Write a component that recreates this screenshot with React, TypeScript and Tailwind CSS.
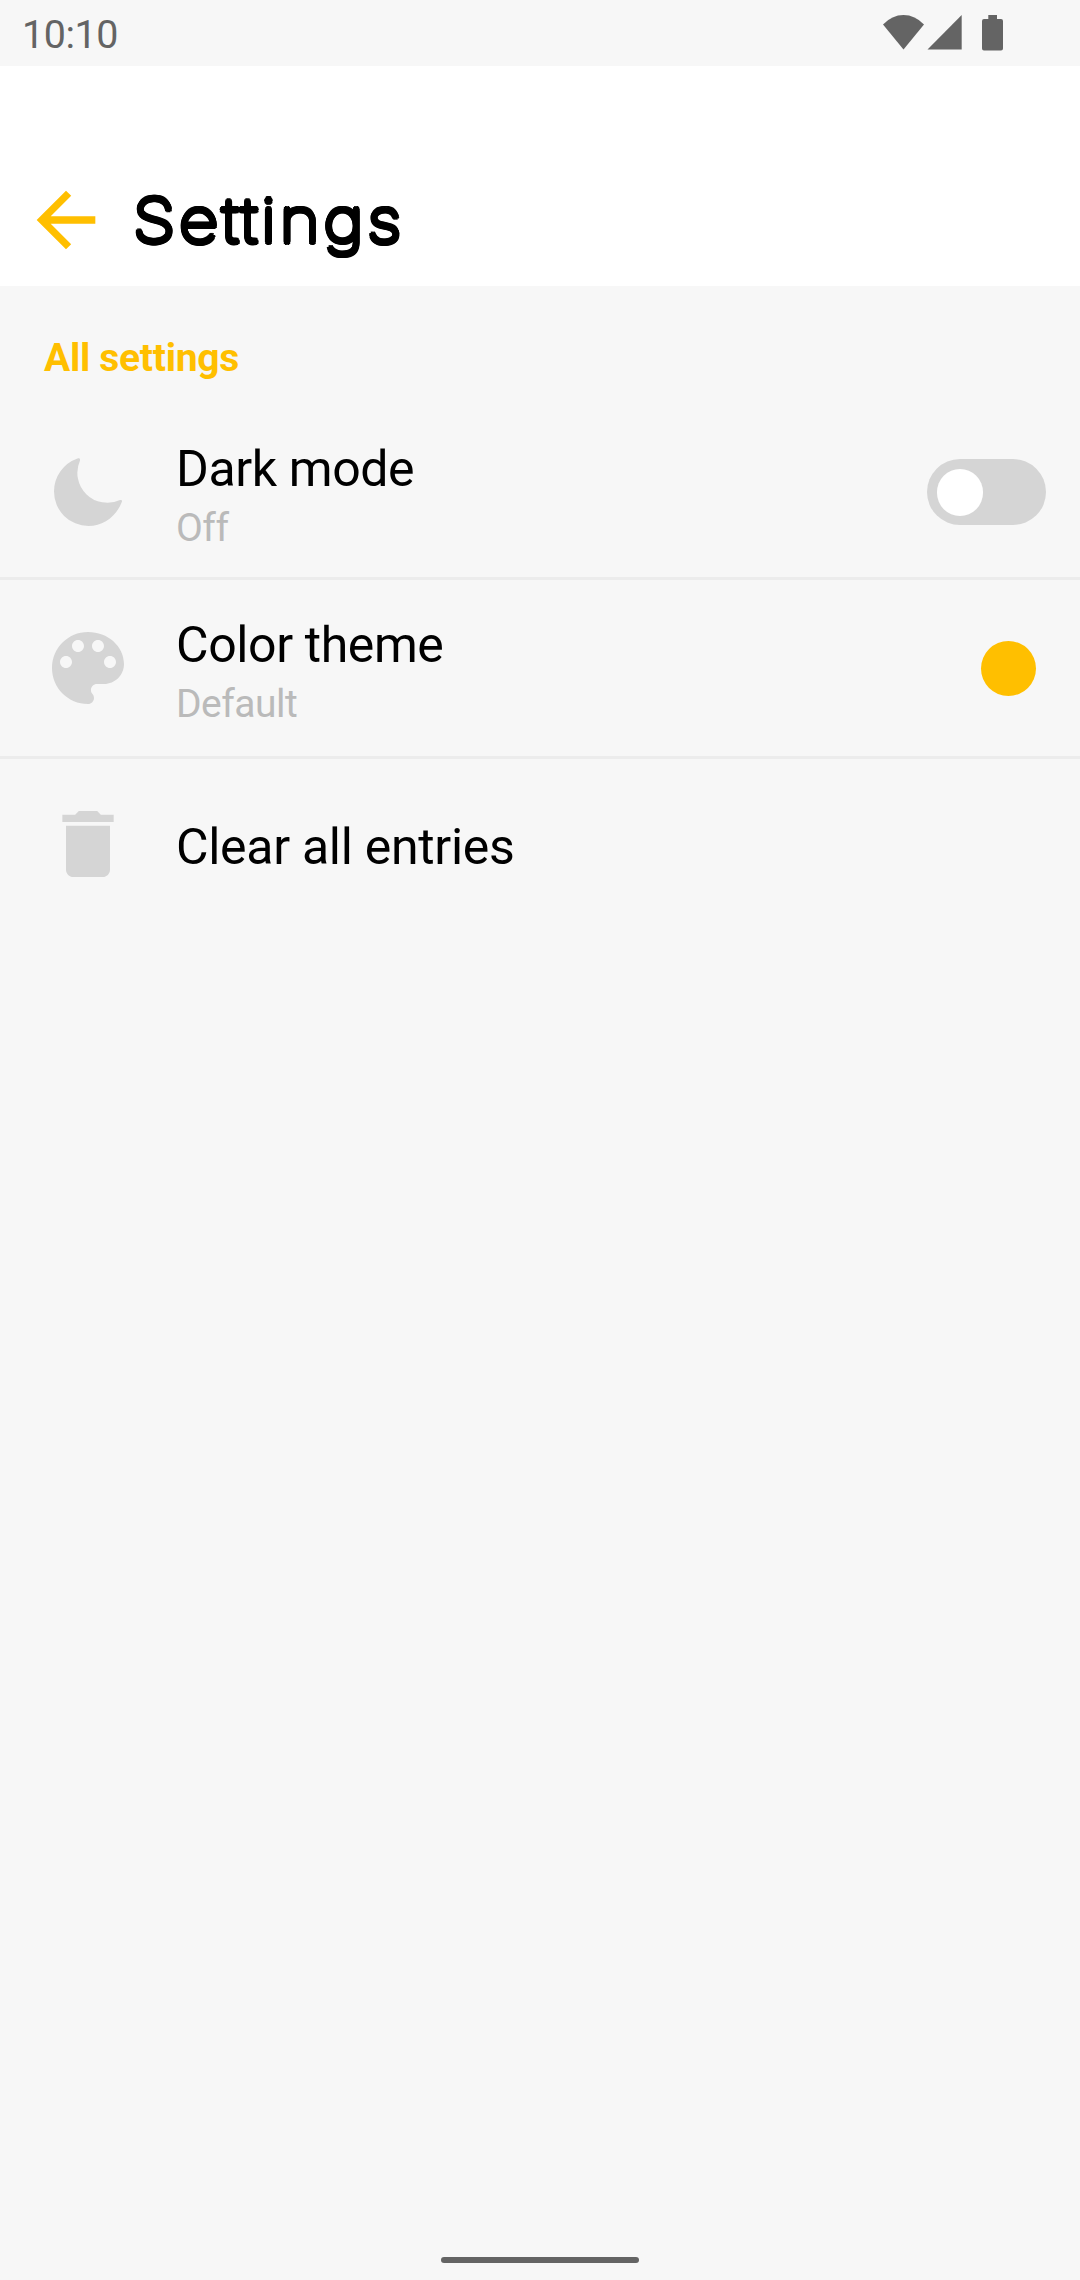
import type { ReactNode } from "react";

function StatusBar() {
  return (
    <div className="flex h-[66px] items-center justify-between bg-[#f7f7f7] pl-[22px] text-[#646464]">
      <span className="pt-[3px] text-[39.4px] leading-[66px] tracking-[-0.4px]">10:10</span>
      <svg className="mr-[76px] h-[66px] w-[122px]" viewBox="882 0 122 66" fill="currentColor">
        <path d="M883 24.5Q892 15 903.500 15T924 24.500L903.500 49.500Z" />
        <path d="M961.700 15V49.500H927.500Z" />
        <path d="M988.300 15H997V19H1001Q1003 19 1003 21V48.500Q1003 50.500 1001 50.500H984Q982 50.500 982 48.500V21Q982 19 984 19H988.300Z" />
      </svg>
    </div>
  );
}

function Header() {
  return (
    <header className="flex h-[220px] items-end bg-white pb-[22px] pl-[22px]">
      <svg className="h-[88px] w-[88px] text-[#ffbf00]" viewBox="0 0 24 24" fill="currentColor">
        <path d="M20 11H7.830l5.590-5.590L12 4l-8 8 8 8 1.410-1.410L7.830 13H20v-2z" />
      </svg>
      {/* A ring of shadows thickens the thin face into rounded strokes. */}
      <h1 className="ml-[23px] origin-left scale-x-[1.14] font-['Inter'] text-[60.5px] leading-[88px] font-thin tracking-[3.2px] text-black [-webkit-text-stroke:4px_black] [text-shadow:2.4px_0_black,2.1px_1.5px_black,1.2px_2.6px_black,0_3px_black,-1.2px_2.6px_black,-2.1px_1.5px_black,-2.4px_0_black,-2.1px_-1.5px_black,-1.2px_-2.6px_black,0_-3px_black,1.2px_-2.6px_black,2.1px_-1.5px_black]">
        Settings
      </h1>
    </header>
  );
}

function MoonIcon() {
  return (
    <svg className="h-[96px] w-[96px]" viewBox="40 444 96 96" fill="currentColor">
      <path d="M77.500 458.400A35 35 0 0 0 54 491.500A34.500 34.500 0 0 0 88.500 526C103 526 116 517 121.800 502C122.500 500.500 121.500 499.600 120 500A30 30 0 0 1 80 460.500C80.400 458.700 79.500 457.700 77.500 458.400Z" />
    </svg>
  );
}

function PaletteIcon() {
  return (
    <svg className="h-[96px] w-[96px]" viewBox="0 0 24 24" fill="currentColor">
      <path d="M12 3c-4.970 0-9 4.030-9 9s4.030 9 9 9c.83 0 1.500-.67 1.500-1.500 0-.39-.15-.74-.39-1.010-.23-.26-.38-.61-.38-.99 0-.83.67-1.500 1.500-1.500H16c2.760 0 5-2.240 5-5 0-4.420-4.030-8-9-8zm-5.500 9c-.83 0-1.500-.67-1.500-1.500S5.670 9 6.500 9 8 9.670 8 10.500 7.330 12 6.500 12zm3-4C8.670 8 8 7.330 8 6.500S8.670 5 9.500 5s1.500.67 1.500 1.500S10.330 8 9.500 8zm5 0c-.83 0-1.500-.67-1.500-1.500S13.670 5 14.500 5s1.500.67 1.500 1.500S15.330 8 14.500 8zm3 4c-.83 0-1.500-.67-1.500-1.500S16.670 9 17.500 9s1.500.67 1.500 1.500-.67 1.500-1.500 1.500z" />
    </svg>
  );
}

function TrashIcon() {
  return (
    <svg className="h-[88px] w-[88px]" viewBox="0 0 24 24" fill="currentColor">
      <path d="M6 19c0 1.100.9 2 2 2h8c1.100 0 2-.9 2-2V7H6v12zM19 4h-3.500l-1-1h-5l-1 1H5v2h14V4z" />
    </svg>
  );
}

type RowProps = {
  icon: ReactNode;
  title: string;
  value?: string;
  control?: ReactNode;
  className?: string;
};

function Row({ icon, title, value, control, className = "tracking-[-0.4px]" }: RowProps) {
  return (
    <div className={"flex h-[176px] items-center border-[#ececec] pl-[40px] " + className}>
      <div className="flex w-24 justify-center text-[#d5d5d5]">{icon}</div>
      <div className={"ml-10 flex grow flex-col " + (value ? "pt-[12px]" : "pt-[6px]")}>
        <span className="text-[50px] leading-[60px] text-black">{title}</span>
        {value && (
          <span className="text-[39px] leading-[58px] tracking-[-0.5px] text-[#bababa]">
            {value}
          </span>
        )}
      </div>
      {control}
    </div>
  );
}

export default function App() {
  return (
    <div className="flex h-[2280px] w-[1080px] flex-col bg-[#f7f7f7] font-['Roboto',sans-serif]">
      <StatusBar />
      <Header />
      <main className="grow">
        <h2 className="h-[118px] pt-[47px] pl-[44px] text-[39px] leading-[50px] font-bold tracking-[-0.3px] text-[#ffbf00]">
          All settings
        </h2>
        <Row
          className="border-b-[3px] pt-[3px] tracking-[-0.4px]"
          icon={<MoonIcon />}
          title="Dark mode"
          value="Off"
          control={
            <div className="mr-[34px] flex h-[66px] w-[119px] items-center rounded-full bg-[#d5d5d5] pl-[10px]">
              <div className="h-[47px] w-[46px] rounded-full bg-white" />
            </div>
          }
        />
        <Row
          icon={<PaletteIcon />}
          title="Color theme"
          value="Default"
          control={<div className="mr-[44px] h-[55px] w-[55px] rounded-full bg-[#ffbf00]" />}
        />
        <Row className="border-t-[3px] pb-[3px] tracking-[-0.3px]" icon={<TrashIcon />} title="Clear all entries" />
      </main>
      <footer className="flex h-[23px] justify-center">
        <div className="h-[6px] w-[198px] rounded-full bg-[#646464]" />
      </footer>
    </div>
  );
}
